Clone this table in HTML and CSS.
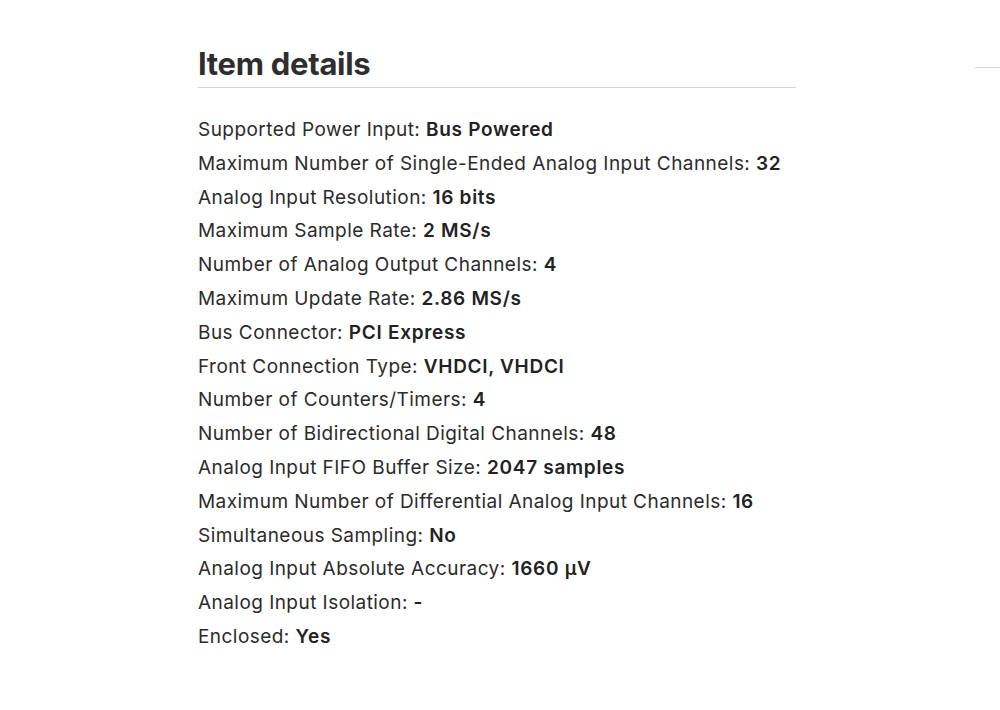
FILE: index.html
```html
<!DOCTYPE html>
<html>
<head>
<meta charset="utf-8">
<link rel="stylesheet" href="styles.css">
</head>
<body>
<div class="page">
  <section class="details">
    <h2 class="title">Item details</h2>
    <ul class="specs">
      <li>Supported Power Input: <b>Bus Powered</b></li>
      <li>Maximum Number of Single-Ended Analog Input Channels: <b>32</b></li>
      <li>Analog Input Resolution: <b>16 bits</b></li>
      <li>Maximum Sample Rate: <b>2 MS/s</b></li>
      <li>Number of Analog Output Channels: <b>4</b></li>
      <li>Maximum Update Rate: <b>2.86 MS/s</b></li>
      <li>Bus Connector: <b>PCI Express</b></li>
      <li>Front Connection Type: <b>VHDCI, VHDCI</b></li>
      <li>Number of Counters/Timers: <b>4</b></li>
      <li>Number of Bidirectional Digital Channels: <b>48</b></li>
      <li>Analog Input FIFO Buffer Size: <b>2047 samples</b></li>
      <li>Maximum Number of Differential Analog Input Channels: <b>16</b></li>
      <li>Simultaneous Sampling: <b>No</b></li>
      <li>Analog Input Absolute Accuracy: <b>1660 µV</b></li>
      <li>Analog Input Isolation: <b>-</b></li>
      <li>Enclosed: <b>Yes</b></li>
    </ul>
  </section>
  <div class="side"><div class="side-rule"></div></div>
</div>
</body>
</html>
```
FILE: styles.css
```css
html, body {
  margin: 0;
  padding: 0;
  background: #fff;
}
body {
  font-family: Inter, "Noto Sans", sans-serif;
  color: #2b2b2b;
}
.page {
  display: flex;
  width: 1000px;
}
.details {
  margin-left: 198px;
  width: 598px;
  padding-top: 44px;
}
.title {
  margin: 0;
  font-size: 31px;
  font-weight: 700;
  letter-spacing: -0.3px;
  line-height: 40px;
  color: #2e2e2e;
  padding-bottom: 3px;
  border-bottom: 1px solid #d4d4d4;
}
.specs {
  list-style: none;
  margin: 25px 0 0;
  padding: 0;
  font-size: 19px;
  line-height: 33.8px;
  letter-spacing: 0.45px;
}
.specs b {
  font-weight: 600;
  letter-spacing: 0.7px;
  color: #222;
}
.side {
  flex: 1;
  display: flex;
  justify-content: flex-end;
  padding-top: 67px;
}
.side-rule {
  width: 25px;
  height: 1px;
  background: #d4d4d4;
}
```
